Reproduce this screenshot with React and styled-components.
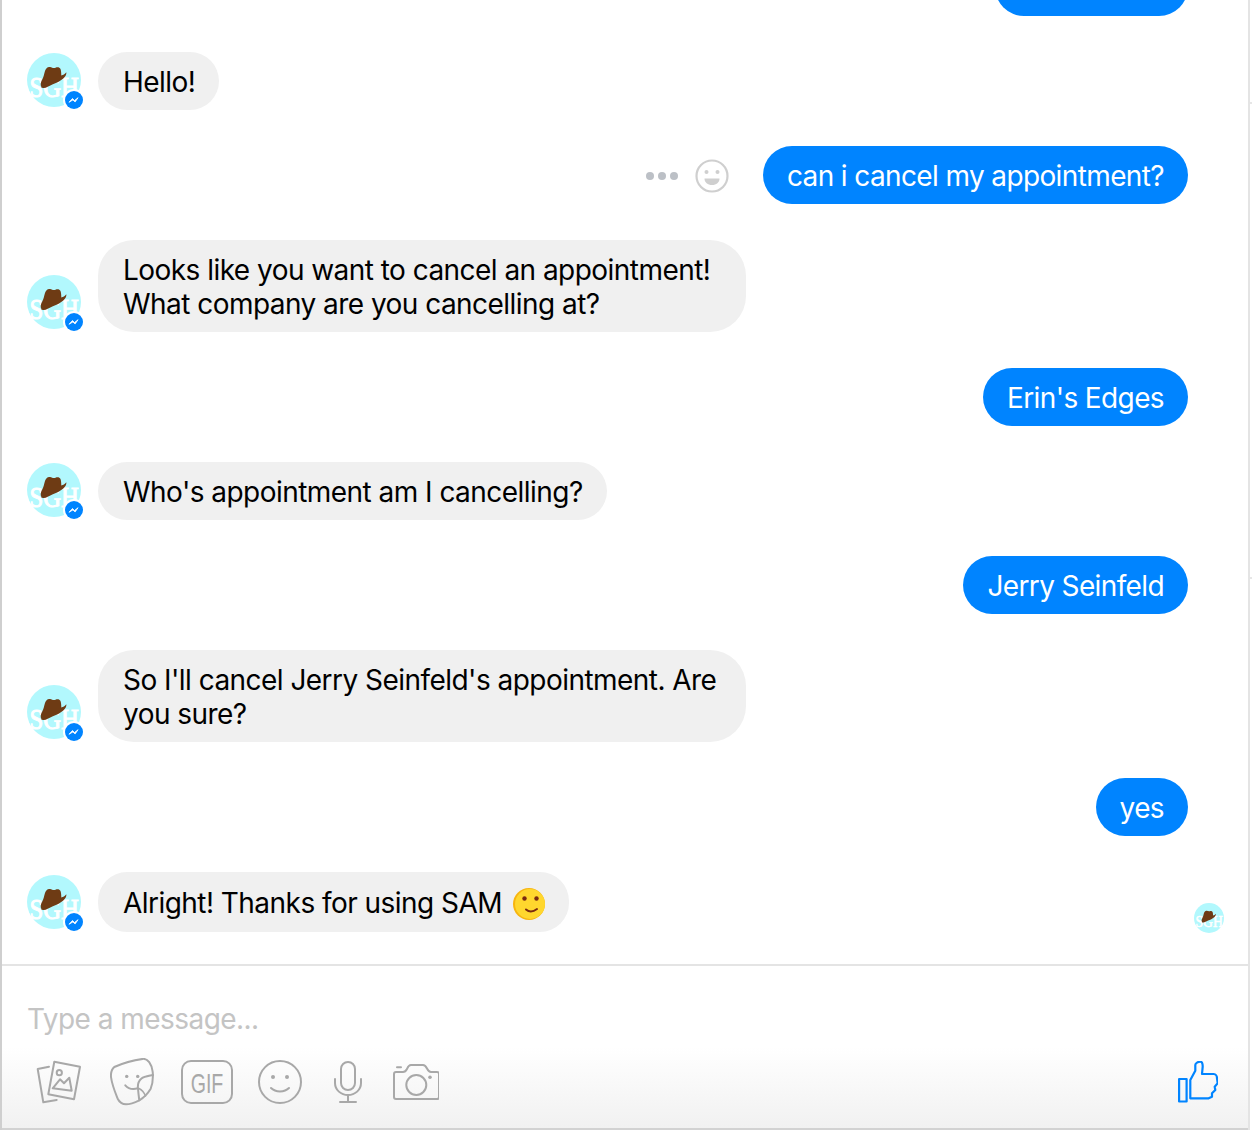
import React from "react";
import styled, { createGlobalStyle } from "styled-components";

const GlobalStyle = createGlobalStyle`
  html, body {
    margin: 0;
    padding: 0;
    background: #fff;
  }
  body {
    font-family: "Inter", "Liberation Sans", sans-serif;
  }
`;

const Page = styled.div`
  position: relative;
  width: 1252px;
  height: 1130px;
  overflow: hidden;
  box-sizing: border-box;
  padding-right: 2px;
`;

const Tick = styled.span`
  position: absolute;
  right: 0;
  top: ${(p) => p.$top}px;
  width: 2px;
  height: 2px;
  background: #e6e6e6;
`;

const Chat = styled.div`
  height: 100%;
  display: flex;
  flex-direction: column;
  box-sizing: border-box;
  border-left: 2px solid #cfcfcf;
  border-right: 2px solid #e4e4e4;
`;

const Messages = styled.div`
  height: 1006px;
  display: flex;
  flex-direction: column;
  gap: 36px;
  margin-top: -42px;
  flex-shrink: 0;
`;

const SentRow = styled.div`
  display: flex;
  justify-content: flex-end;
  align-items: center;
  padding-right: 60px;
`;

const ReceivedRow = styled.div`
  display: flex;
  align-items: flex-end;
  padding: 0 24px 0 25px;
`;

const Bubble = styled.div`
  box-sizing: border-box;
  min-height: 58px;
  padding: 13px 24px 11px 25px;
  font-size: 28px;
  line-height: 34px;
  letter-spacing: -0.54px;
  border-radius: ${(p) => (p.$multi ? "36px" : "29px")};
`;

const SentBubble = styled(Bubble)`
  background: #0084ff;
  color: #fff;
  padding-left: 24px;
  letter-spacing: -0.62px;
  width: ${(p) => (p.$w ? `${p.$w}px` : "auto")};
`;

const ReceivedBubble = styled(Bubble)`
  background: #f0f0f0;
  color: #000;
  margin-left: 17px;
  width: ${(p) => (p.$multi ? "648px" : "auto")};
  min-height: ${(p) => (p.$tall ? "60px" : "58px")};
  display: ${(p) => (p.$multi ? "block" : "flex")};
  align-items: center;
`;

const AvatarWrap = styled.div`
  position: relative;
  width: 54px;
  height: 54px;
  margin-bottom: 3px;
  flex-shrink: 0;
`;

const Badge = styled.span`
  position: absolute;
  right: -4px;
  bottom: -4px;
  width: 22px;
  height: 22px;
  border-radius: 50%;
  background: #fff;
  display: flex;
  align-items: center;
  justify-content: center;
`;

const Seen = styled.div`
  width: 30px;
  height: 30px;
  margin-left: auto;
  margin-bottom: -1px;
`;

const Actions = styled.div`
  display: flex;
  align-items: center;
  margin: 2px 33px 0 0;
`;

const Dots = styled.div`
  display: flex;
  gap: 4px;
  margin-right: 16px;
`;

const Dot = styled.span`
  width: 8px;
  height: 8px;
  border-radius: 50%;
  background: #bcc0c6;
`;

const EmojiWrap = styled.span`
  display: flex;
  margin: 2px 0 0 11px;
`;

const Composer = styled.div`
  flex: 1;
  display: flex;
  flex-direction: column;
  border-top: 2px solid #e4e4e4;
  border-bottom: 2px solid #d2d2d2;
  background: linear-gradient(to bottom, #fff 50%, #f1f1f1 100%);
`;

const Placeholder = styled.div`
  padding: 36px 0 0 25px;
  font-size: 28px;
  line-height: 34px;
  letter-spacing: -0.54px;
  color: #c4c4c4;
`;

const Toolbar = styled.div`
  display: flex;
  align-items: center;
  margin-top: 21px;
  padding: 0 30px 0 20px;
`;

const ToolSlot = styled.div`
  width: ${(p) => p.$w}px;
  height: 50px;
  display: flex;
  align-items: center;
  justify-content: center;
`;

const LikeSlot = styled.div`
  margin-left: auto;
  display: flex;
  align-items: center;
`;

const Avatar = ({ size = 54 }) => (
  <svg width={size} height={size} viewBox="0 0 54 54">
    <circle cx="27" cy="27" r="27" fill="#b2f8fd" />
    <text
      transform="translate(2.500 44) scale(0.85 1)"
      fontFamily="Liberation Serif, serif"
      fontSize="29"
      fill="#fff"
      stroke="#fff"
      strokeWidth="1"
    >
      SGH
    </text>
    <path
      d="M14.500 34c-1.500-2-.5-5.500 1-8 1.200-2 1.500-5 2.500-8 .8-2.500 2.500-4.500 5-4 2 .4 3.500 1.600 5.500.8 2-.8 4-.6 5 1.200.7 2 .8 4.500.8 6.500 2-.6 3.500-1.400 5-3.300.5 2-1 4.500-3 6.300-3 2.700-7 4.500-11 6-3.500 1.500-6 3.500-8.500 3.500-1.200 0-2.200-.3-2.800-1z"
      fill="#6e3b14"
    />
  </svg>
);

const MessengerBadge = () => (
  <svg width="18" height="18" viewBox="0 0 18 18">
    <circle cx="9" cy="9" r="9" fill="#0084ff" />
    <path
      d="M4 11.300l3.500-3.800 2 2 3.600-2.800-3 4.200-2.200-2z"
      fill="#fff"
      stroke="#fff"
      strokeWidth="0.8"
      strokeLinejoin="round"
    />
  </svg>
);

const BotAvatar = () => (
  <AvatarWrap>
    <Avatar />
    <Badge>
      <MessengerBadge />
    </Badge>
  </AvatarWrap>
);

const ReactIcon = () => (
  <svg width="36" height="36" viewBox="0 0 36 36">
    <circle cx="18" cy="18" r="15.500" fill="none" stroke="#cfcfcf" strokeWidth="2.200" />
    <circle cx="12.500" cy="14" r="2" fill="#cfcfcf" />
    <circle cx="23.500" cy="14" r="2" fill="#cfcfcf" />
    <path d="M10.500 20.500h15c0 4-3.200 6.500-7.500 6.500s-7.500-2.500-7.500-6.500z" fill="#cfcfcf" />
  </svg>
);

const SmileEmoji = () => (
  <svg width="32" height="32" viewBox="0 0 32 32">
    <circle cx="16" cy="16" r="16" fill="#f7b50f" />
    <circle cx="17" cy="16" r="15" fill="#ffd72e" />
    <circle cx="11.500" cy="10.500" r="2.200" fill="#7a2a10" />
    <circle cx="23.500" cy="10.500" r="2.200" fill="#7a2a10" />
    <path d="M13 21.500c3 2.500 7 2.500 11-.5" fill="none" stroke="#7a2a10" strokeWidth="2" strokeLinecap="round" />
  </svg>
);

const toolStroke = {
  fill: "none",
  stroke: "#a8a8a8",
  strokeWidth: 2,
  strokeLinecap: "round",
  strokeLinejoin: "round",
};

const PhotoIcon = () => (
  <svg width="46" height="44" viewBox="0 0 46 44" {...toolStroke}>
    <path d="M13 6.700L1.700 9l5.600 33.300L20.700 40" />
    <path d="M18.300 1.700L44 6.700l-6 32.600-25.700-5z" />
    <circle cx="23.300" cy="12.700" r="2.600" />
    <path d="M16.700 28.300L24 19.300l4 4 5.300-5.600 2.400 13z" />
  </svg>
);

const StickerIcon = () => (
  <svg width="44" height="48" viewBox="0 0 44 48" {...toolStroke}>
    <path d="M4.300 9C12 5.500 24 2 32.700.9c5-.5 9 5 10 13 .5 6 0 12-2 16.800-3 5-7 9-11.400 11.600-4 2-8.500 4-13.300 4-3.500 0-6.500-2-8.300-5.600C5 34 2 27 1 19c-.3-4 1-8 3.300-10z" />
    <path d="M43 17c-4.500 1-9 1.500-11.500 3.500-3 2.500-4 6-3.500 10 .3 4 .8 8 1.300 11.800" />
    <path d="M29 30.500c3 1.500 5.500 5 6.500 7.500" strokeWidth="1.400" />
    <circle cx="16.700" cy="18.400" r="1.700" fill="#a8a8a8" stroke="none" />
    <circle cx="27.700" cy="18.400" r="1.700" fill="#a8a8a8" stroke="none" />
    <path d="M15.300 27.300c3 3.500 8 4.300 12.500 3" />
  </svg>
);

const GifIcon = () => (
  <svg width="52" height="44" viewBox="0 0 52 44">
    <rect x="1" y="1" width="50" height="42" rx="9" fill="none" stroke="#a8a8a8" strokeWidth="2" />
    <text
      transform="translate(26 33) scale(0.7 1)"
      textAnchor="middle"
      fontFamily="Liberation Sans, sans-serif"
      fontSize="28"
      fill="#a8a8a8"
    >
      GIF
    </text>
  </svg>
);

const SmileIcon = () => (
  <svg width="44" height="44" viewBox="0 0 44 44" {...toolStroke}>
    <circle cx="22" cy="22" r="21" />
    <circle cx="15" cy="17" r="2" fill="#a8a8a8" stroke="none" />
    <circle cx="29" cy="17" r="2" fill="#a8a8a8" stroke="none" />
    <path d="M13 28c4.500 4.500 13.500 4.500 18 0" />
  </svg>
);

const MicIcon = () => (
  <svg width="28" height="42" viewBox="0 0 28 42" {...toolStroke}>
    <rect x="7" y="1" width="14" height="28" rx="7" />
    <path d="M1 18v4c0 7 6 12 13 12s13-5 13-12v-4" />
    <path d="M14 34v7M6 41h16" />
  </svg>
);

const CameraIcon = () => (
  <svg width="46" height="36" viewBox="0 0 46 36" {...toolStroke}>
    <path d="M3 8h7c2 0 3-1 4-3 1-2.500 2-4 4-4h12c2 0 3 1.500 4 3.500 1 2 2 3.500 4 3.500h6a2 2 0 0 1 2 2v23a2 2 0 0 1-2 2H3a2 2 0 0 1-2-2V10a2 2 0 0 1 2-2z" />
    <circle cx="23.300" cy="21" r="10" />
    <circle cx="37" cy="13.300" r="1.800" fill="#a8a8a8" stroke="none" />
    <path d="M4 3.300h4" />
  </svg>
);

const LikeIcon = () => (
  <svg width="40" height="42" viewBox="0 0 40 42" fill="none" stroke="#0084ff" strokeWidth="2.200" strokeLinejoin="round">
    <rect x="1.100" y="18" width="7.500" height="22.500" />
    <path d="M12.300 37.300V19l5-9.300V4c0-2 3-3.300 5-3.300 1.700 0 2.400 3 2.400 5L24 13h11.700c2 0 3.300 2 3.300 4.300l.7 5-3 3.400.6 3.300-3.300 3.300v3.400l-3.300 1.600z" />
  </svg>
);

const App = () => {
  return (
    <Page>
      <GlobalStyle />
      <Tick $top={102} />
      <Tick $top={577} />
      <Chat>
        <Messages>
          <SentRow>
            <SentBubble $w={193}>&nbsp;</SentBubble>
          </SentRow>
          <ReceivedRow>
            <BotAvatar />
            <ReceivedBubble>Hello!</ReceivedBubble>
          </ReceivedRow>
          <SentRow>
            <Actions>
              <Dots>
                <Dot />
                <Dot />
                <Dot />
              </Dots>
              <ReactIcon />
            </Actions>
            <SentBubble>can i cancel my appointment?</SentBubble>
          </SentRow>
          <ReceivedRow>
            <BotAvatar />
            <ReceivedBubble $multi>
              Looks like you want to cancel an appointment!
              <br />
              What company are you cancelling at?
            </ReceivedBubble>
          </ReceivedRow>
          <SentRow>
            <SentBubble>Erin's Edges</SentBubble>
          </SentRow>
          <ReceivedRow>
            <BotAvatar />
            <ReceivedBubble>Who's appointment am I cancelling?</ReceivedBubble>
          </ReceivedRow>
          <SentRow>
            <SentBubble>Jerry Seinfeld</SentBubble>
          </SentRow>
          <ReceivedRow>
            <BotAvatar />
            <ReceivedBubble $multi>
              So I'll cancel Jerry Seinfeld's appointment. Are
              <br />
              you sure?
            </ReceivedBubble>
          </ReceivedRow>
          <SentRow>
            <SentBubble>yes</SentBubble>
          </SentRow>
          <ReceivedRow>
            <BotAvatar />
            <ReceivedBubble $tall>
              Alright! Thanks for using SAM
              <EmojiWrap>
                <SmileEmoji />
              </EmojiWrap>
            </ReceivedBubble>
            <Seen>
              <Avatar size={30} />
            </Seen>
          </ReceivedRow>
        </Messages>
        <Composer>
          <Placeholder>Type a message...</Placeholder>
          <Toolbar>
            <ToolSlot $w={73}>
              <PhotoIcon />
            </ToolSlot>
            <ToolSlot $w={74}>
              <StickerIcon />
            </ToolSlot>
            <ToolSlot $w={75}>
              <GifIcon />
            </ToolSlot>
            <ToolSlot $w={72}>
              <SmileIcon />
            </ToolSlot>
            <ToolSlot $w={64}>
              <MicIcon />
            </ToolSlot>
            <ToolSlot $w={72}>
              <CameraIcon />
            </ToolSlot>
            <LikeSlot>
              <LikeIcon />
            </LikeSlot>
          </Toolbar>
        </Composer>
      </Chat>
    </Page>
  );
};

export default App;
